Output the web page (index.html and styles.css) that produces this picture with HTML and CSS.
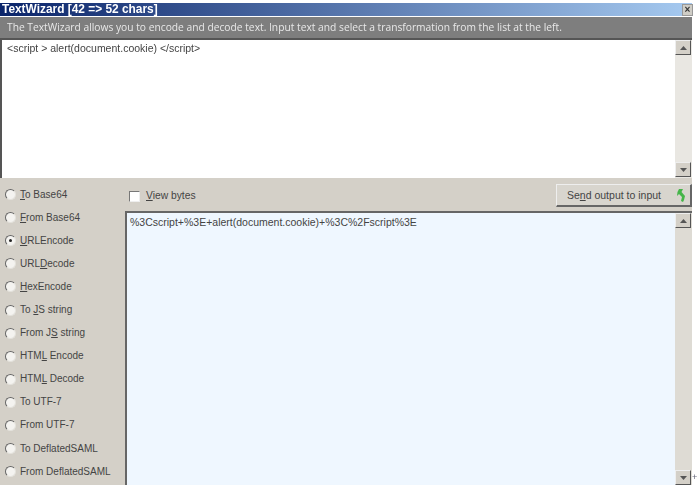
FILE: index.html
```html
<!DOCTYPE html>
<html lang="en">
<head>
<meta charset="utf-8">
<title>TextWizard</title>
<link rel="stylesheet" href="styles.css">
</head>
<body>
<div class="window">
  <div class="main">
    <div class="titlebar"><span class="title">TextWizard [42 =&gt; 52 chars]</span></div>
    <div class="infobar">The TextWizard allows you to encode and decode text. Input text and select a transformation from the list at the left.</div>
    <div class="inputbox">
      <div class="textarea">&lt;script &gt; alert(document.cookie) &lt;/script&gt;</div>
      <div class="scrollbar">
        <div class="sbtn"><svg width="7" height="4" viewBox="0 0 7 4"><path d="M3.5 0 7 4H0z" fill="#555"/></svg></div>
        <div class="sbtn"><svg width="7" height="4" viewBox="0 0 7 4"><path d="M0 0h7L3.500 4z" fill="#555"/></svg></div>
      </div>
    </div>
    <div class="lower">
      <div class="options">
        <label class="opt"><span class="radio"></span><span><u>T</u>o Base64</span></label>
        <label class="opt"><span class="radio"></span><span><u>F</u>rom Base64</span></label>
        <label class="opt"><span class="radio on"></span><span><u>U</u>RLEncode</span></label>
        <label class="opt"><span class="radio"></span><span>URL<u>D</u>ecode</span></label>
        <label class="opt"><span class="radio"></span><span><u>H</u>exEncode</span></label>
        <label class="opt"><span class="radio"></span><span>To <u>J</u>S string</span></label>
        <label class="opt"><span class="radio"></span><span>From J<u>S</u> string</span></label>
        <label class="opt"><span class="radio"></span><span>HTM<u>L</u> Encode</span></label>
        <label class="opt"><span class="radio"></span><span>HTM<u>L</u> Decode</span></label>
        <label class="opt"><span class="radio"></span><span>To UTF-7</span></label>
        <label class="opt"><span class="radio"></span><span>From UTF-7</span></label>
        <label class="opt"><span class="radio"></span><span>To DeflatedSAML</span></label>
        <label class="opt"><span class="radio"></span><span>From DeflatedSAML</span></label>
      </div>
      <div class="output-col">
        <div class="toolbar">
          <label class="viewbytes"><span class="check"></span><span><u>V</u>iew bytes</span></label>
          <div class="sendbtn"><span>Se<u>n</u>d output to input</span>
            <svg width="12" height="15" viewBox="0 0 12 15"><path d="M4 1h4L6.500 4 10 8 9 12l-1 2-2-1 1-4-3-3-2 2 .5-4z" fill="#45b549"/></svg>
          </div>
        </div>
        <div class="outputbox">
          <div class="output">%3Cscript+%3E+alert(document.cookie)+%3C%2Fscript%3E</div>
          <div class="scrollbar out">
            <div class="sbtn"><svg width="7" height="4" viewBox="0 0 7 4"><path d="M3.500 0 7 4H0z" fill="#555"/></svg></div>
            <div class="sbtn"><svg width="7" height="4" viewBox="0 0 7 4"><path d="M0 0h7L3.500 4z" fill="#555"/></svg></div>
          </div>
        </div>
      </div>
    </div>
  </div>
  <div class="side">
    <div class="close">×</div>
    <div class="grip">+</div>
  </div>
</div>
</body>
</html>
```
FILE: styles.css
```css
* { box-sizing: border-box; }
html, body { margin: 0; height: 100%; background: #fff; overflow: hidden; }
body { font-family: "Liberation Sans", sans-serif; font-size: 10px; color: #444; }
.window { display: flex; width: 699px; height: 485px; padding-top: 3px; filter: blur(0.5px); }
.main { width: 692px; display: flex; flex-direction: column; flex: none; }
.side { flex: 1; display: flex; flex-direction: column; justify-content: space-between; align-items: center; position: relative; }
.close { position: absolute; left: -10px; top: 1px; width: 11px; height: 12px; background: #cfcdc6; border: 1px solid #999; font: bold 10px/9px "Liberation Sans", sans-serif; text-align: center; color: #333; }
.grip { position: absolute; left: 0; top: 469px; font: 9px/10px "Liberation Sans", sans-serif; color: #667; }
.titlebar { height: 13px; background: linear-gradient(90deg, #0a246a, #a6caf0); color: #fff; padding-left: 2px; }
.title { font: bold 11.900px/13px "Liberation Sans", sans-serif; }
.infobar { height: 21px; margin-top: 1px; background: #7e7e7e; color: #e8e8e8; font: 10.250px/20px "Open Sans", "DejaVu Sans", sans-serif; padding-left: 7px; white-space: nowrap; }
.inputbox { height: 140px; display: flex; background: #fff; border-left: 2px solid #555; border-top: 2px solid #555; }
.textarea { flex: 1; padding: 1px 5px; font: 10.500px/14px "Liberation Sans", sans-serif; color: #444; }
.scrollbar { width: 17px; background: #e9e7e2; display: flex; flex-direction: column; justify-content: space-between; flex: none; }
.inputbox .scrollbar { padding: 0 0 1px 0; }
.sbtn { width: 16px; height: 15px; background: #d4d0c8; border: 1px solid #eee; border-right-color: #555; border-bottom-color: #555; display: flex; align-items: center; justify-content: center; }
.lower { flex: 1; display: flex; background: #d4d0c8; min-height: 0; }
.options { width: 125px; flex: none; display: flex; flex-direction: column; padding-top: 5px; }
.opt { display: flex; align-items: center; height: 23.100px; padding-left: 5px; gap: 4px; font: 10px/14px "Liberation Sans", sans-serif; color: #444; white-space: nowrap; }
.radio { width: 11px; height: 11px; border-radius: 50%; background: #f4f3f0; border: 1.500px solid #666; border-right-color: #e4e2dc; border-bottom-color: #e4e2dc; flex: none; position: relative; }
.radio.on::after { content: ""; position: absolute; left: 2.500px; top: 2.500px; width: 3px; height: 3px; border-radius: 50%; background: #222; }
.output-col { flex: 1; display: flex; flex-direction: column; min-width: 0; }
.toolbar { height: 33px; display: flex; align-items: flex-start; justify-content: space-between; padding-top: 6px; }
.viewbytes { display: flex; align-items: center; gap: 6px; padding: 5px 0 0 4px; font: 10.300px/14px "Liberation Sans", sans-serif; color: #444; }
.check { width: 11px; height: 11px; background: #fff; border: 1px solid #777; border-right-color: #eee; border-bottom-color: #eee; }
.sendbtn { width: 136px; height: 23px; display: flex; align-items: center; justify-content: space-between; padding: 0 3px 0 10px; background: #d8d5ce; border: 1px solid #eee; border-right: 2px solid #666; border-bottom: 2px solid #666; font: 10.500px/14px "Liberation Sans", sans-serif; color: #444; }
.outputbox { flex: 1; display: flex; background: #eff7ff; border-left: 2px solid #666; border-top: 2px solid #666; min-height: 0; }
.output { flex: 1; padding: 2px 3px; font: 10.500px/14px "Liberation Sans", sans-serif; color: #444; }
.scrollbar.out { background: #dedbd4; }
```
